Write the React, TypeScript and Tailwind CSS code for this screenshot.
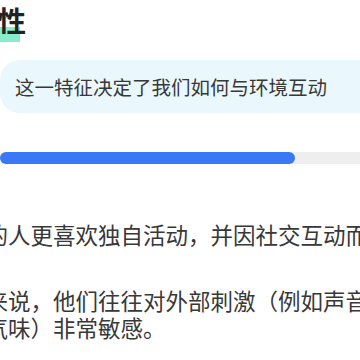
export default function App() {
  return (
    <div className="w-[360px] h-[360px] overflow-hidden bg-white font-['Noto_Sans_CJK_SC','Noto_Sans',sans-serif] text-[#383838]">
      <div className="w-[420px]">
        <div className="-ml-[58px] h-[40px]">
          <h2 className="relative inline-block text-[28px] leading-[40px] font-bold text-[#222222]">
            <span className="absolute left-0 right-[6px] top-[27px] h-[15px] bg-[#86eecb]" />
            <span className="relative">内向性</span>
          </h2>
        </div>

        <div className="mt-[20px] h-[53px] rounded-l-[20px] bg-[#eaf8fd] flex items-center pl-[15px] text-[19.5px] whitespace-nowrap">
          这一特征决定了我们如何与环境互动
        </div>

        <div className="mt-[39px] h-[12px] rounded-full bg-[#eeeeee]">
          <div className="h-full w-[295px] rounded-full bg-[#3b78f6]" />
        </div>

        <div className="-ml-[127px] w-[700px] mt-[57px] text-[22.5px] leading-[27px] whitespace-nowrap">
          <p>具有内向性的人更喜欢独自活动，并因社交互动而感到疲惫。</p>
          <p className="mt-[39px]">
            对于内向者来说，他们往往对外部刺激（例如声音、
            <br />
            光线与强烈气味）非常敏感。
          </p>
        </div>
      </div>
    </div>
  )
}
